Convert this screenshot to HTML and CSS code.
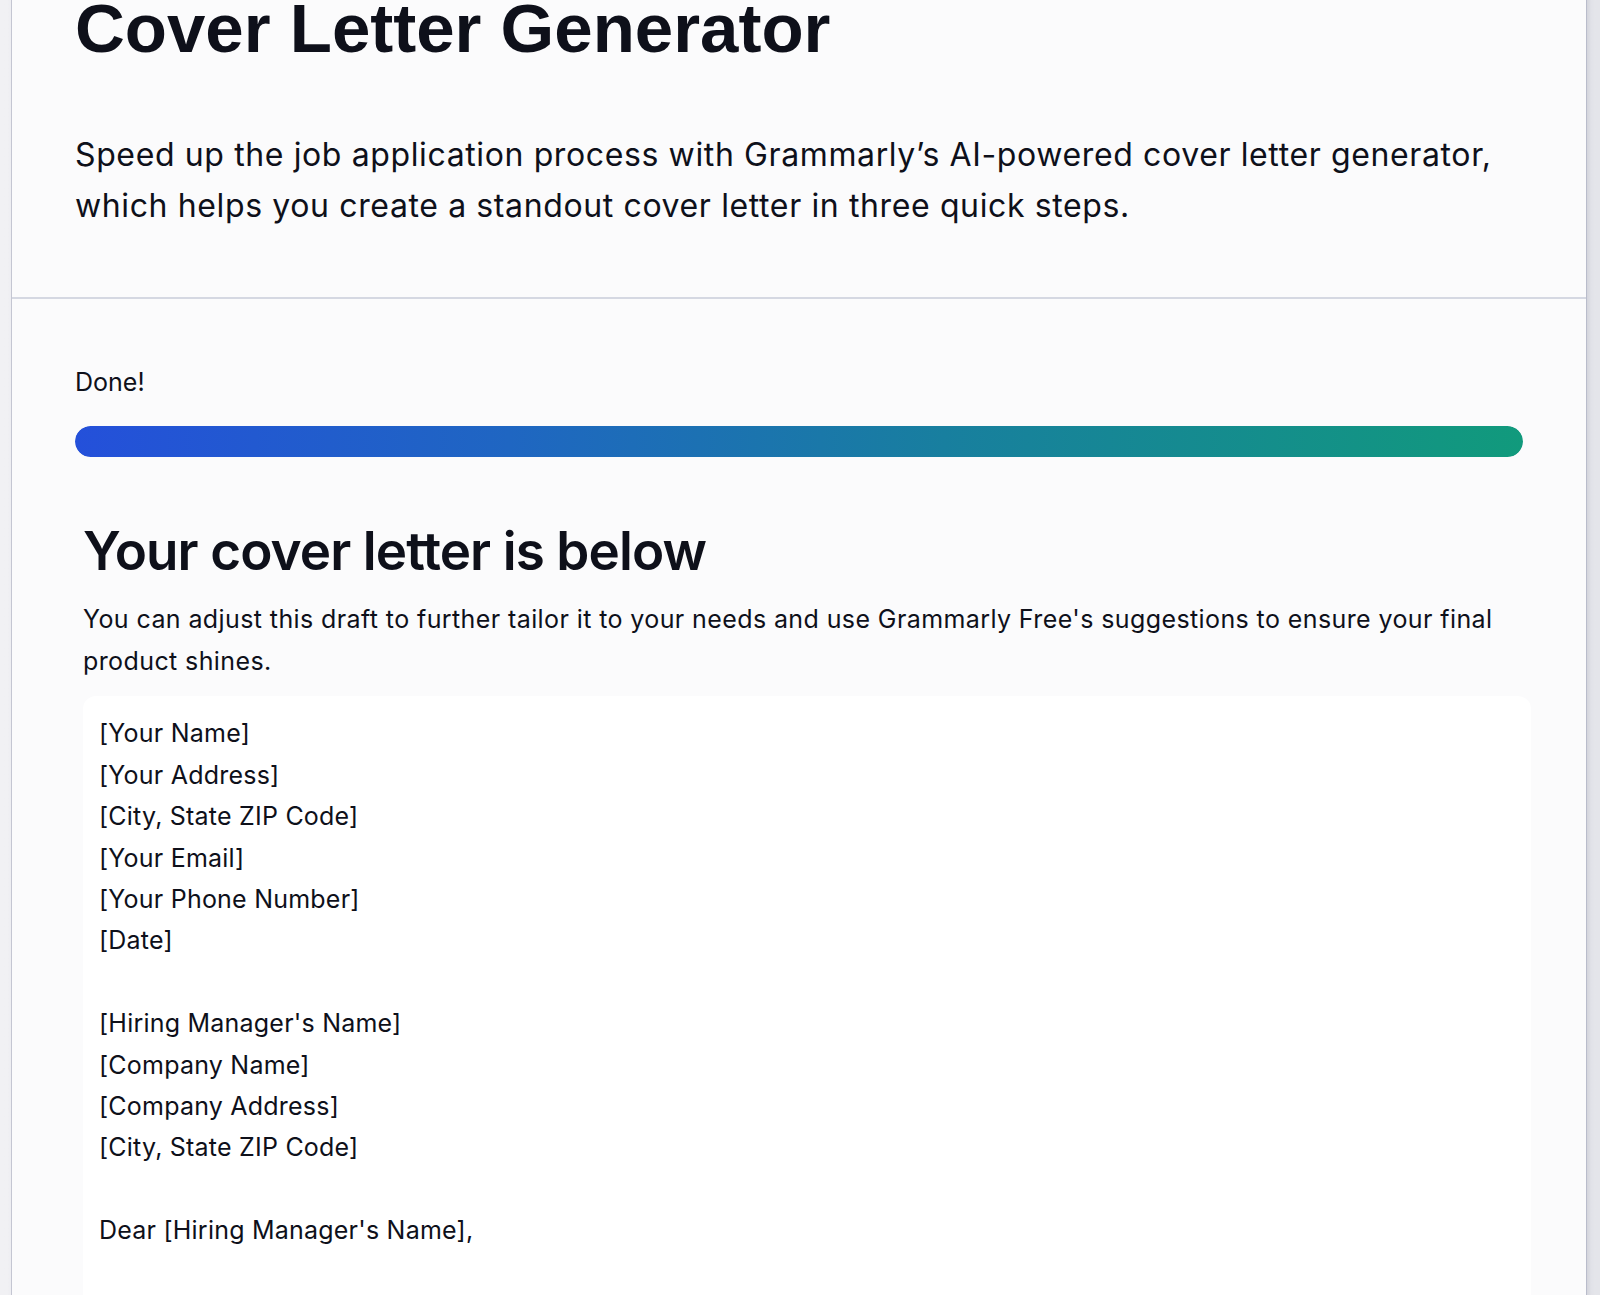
FILE: index.html
```html
<!DOCTYPE html>
<html lang="en">
<head>
<meta charset="utf-8">
<title>Cover Letter Generator</title>
<link rel="stylesheet" href="styles.css">
</head>
<body>
<div class="page">
  <header class="intro">
    <h1 class="title">Cover Letter Generator</h1>
    <p class="lead">Speed up the job application process with Grammarly’s AI-powered cover letter generator, which helps you create a standout cover letter in three quick steps.</p>
  </header>
  <main class="tool">
    <div class="status">Done!</div>
    <div class="progress"><div class="progress-fill" style="width:100%"></div></div>
    <section class="result">
      <h2 class="result-title">Your cover letter is below</h2>
      <p class="result-desc">You can adjust this draft to further tailor it to your needs and use Grammarly Free's suggestions to ensure your final product shines.</p>
      <div class="letter">
        <div class="line">[Your Name]</div>
        <div class="line">[Your Address]</div>
        <div class="line">[City, State ZIP Code]</div>
        <div class="line">[Your Email]</div>
        <div class="line">[Your Phone Number]</div>
        <div class="line">[Date]</div>
        <div class="line blank"></div>
        <div class="line">[Hiring Manager's Name]</div>
        <div class="line">[Company Name]</div>
        <div class="line">[Company Address]</div>
        <div class="line">[City, State ZIP Code]</div>
        <div class="line blank"></div>
        <div class="line">Dear [Hiring Manager's Name],</div>
      </div>
    </section>
  </main>
</div>
</body>
</html>
```

FILE: styles.css
```css
html, body {
  margin: 0;
  padding: 0;
  height: 100%;
  overflow: hidden;
}
body {
  background: linear-gradient(90deg, #f1f1f4 0%, #e4e5ea 100%);
  font-family: "Inter", "Liberation Sans", sans-serif;
  color: #0e101a;
}
.page {
  margin-left: 11px;
  width: 1574px;
  min-height: 1400px;
  background: #fbfbfc;
  border-left: 1px solid #c4c6d2;
  border-right: 1px solid #b9bccb;
  box-shadow: 2px 0 4px rgba(150, 152, 170, 0.25);
}
.intro {
  padding: 0 63px 66px 63px;
  border-bottom: 2px solid #d5d8e2;
}
.title {
  margin: -12px 0 0 0;
  font-family: "Liberation Sans", Arial, sans-serif;
  font-weight: 700;
  font-size: 69px;
  line-height: 1.2;
  color: #0e101a;
}
.lead {
  margin: 58px 0 0 0;
  font-size: 32px;
  line-height: 51px;
  letter-spacing: 0.62px;
  font-weight: 400;
  color: #0e101a;
}
.tool {
  padding: 63px 63px 0 63px;
}
.status {
  font-size: 25px;
  line-height: 41px;
}
.progress {
  margin-top: 23px;
  height: 31px;
  border-radius: 16px;
  background: #e6e8ef;
  overflow: hidden;
}
.progress-fill {
  height: 100%;
  border-radius: 16px;
  background: linear-gradient(90deg, #2450da 0%, #1f66c2 30%, #187f9f 60%, #119a7c 100%);
}
.result {
  margin: 63px -8px 0 8px;
}
.result-title {
  margin: 0;
  font-size: 53px;
  line-height: 1.2;
  font-weight: 600;
  letter-spacing: -0.9px;
}
.result-desc {
  margin: 16px 0 0 0;
  font-size: 25px;
  line-height: 41.5px;
  letter-spacing: 0.4px;
}
.letter {
  margin-top: 14px;
  background: #ffffff;
  border-radius: 13px;
  padding: 17px 16px 40px 16px;
  min-height: 700px;
  font-size: 25px;
  line-height: 41.4px;
  letter-spacing: 0.22px;
}
.line.blank {
  height: 41.4px;
}
```
